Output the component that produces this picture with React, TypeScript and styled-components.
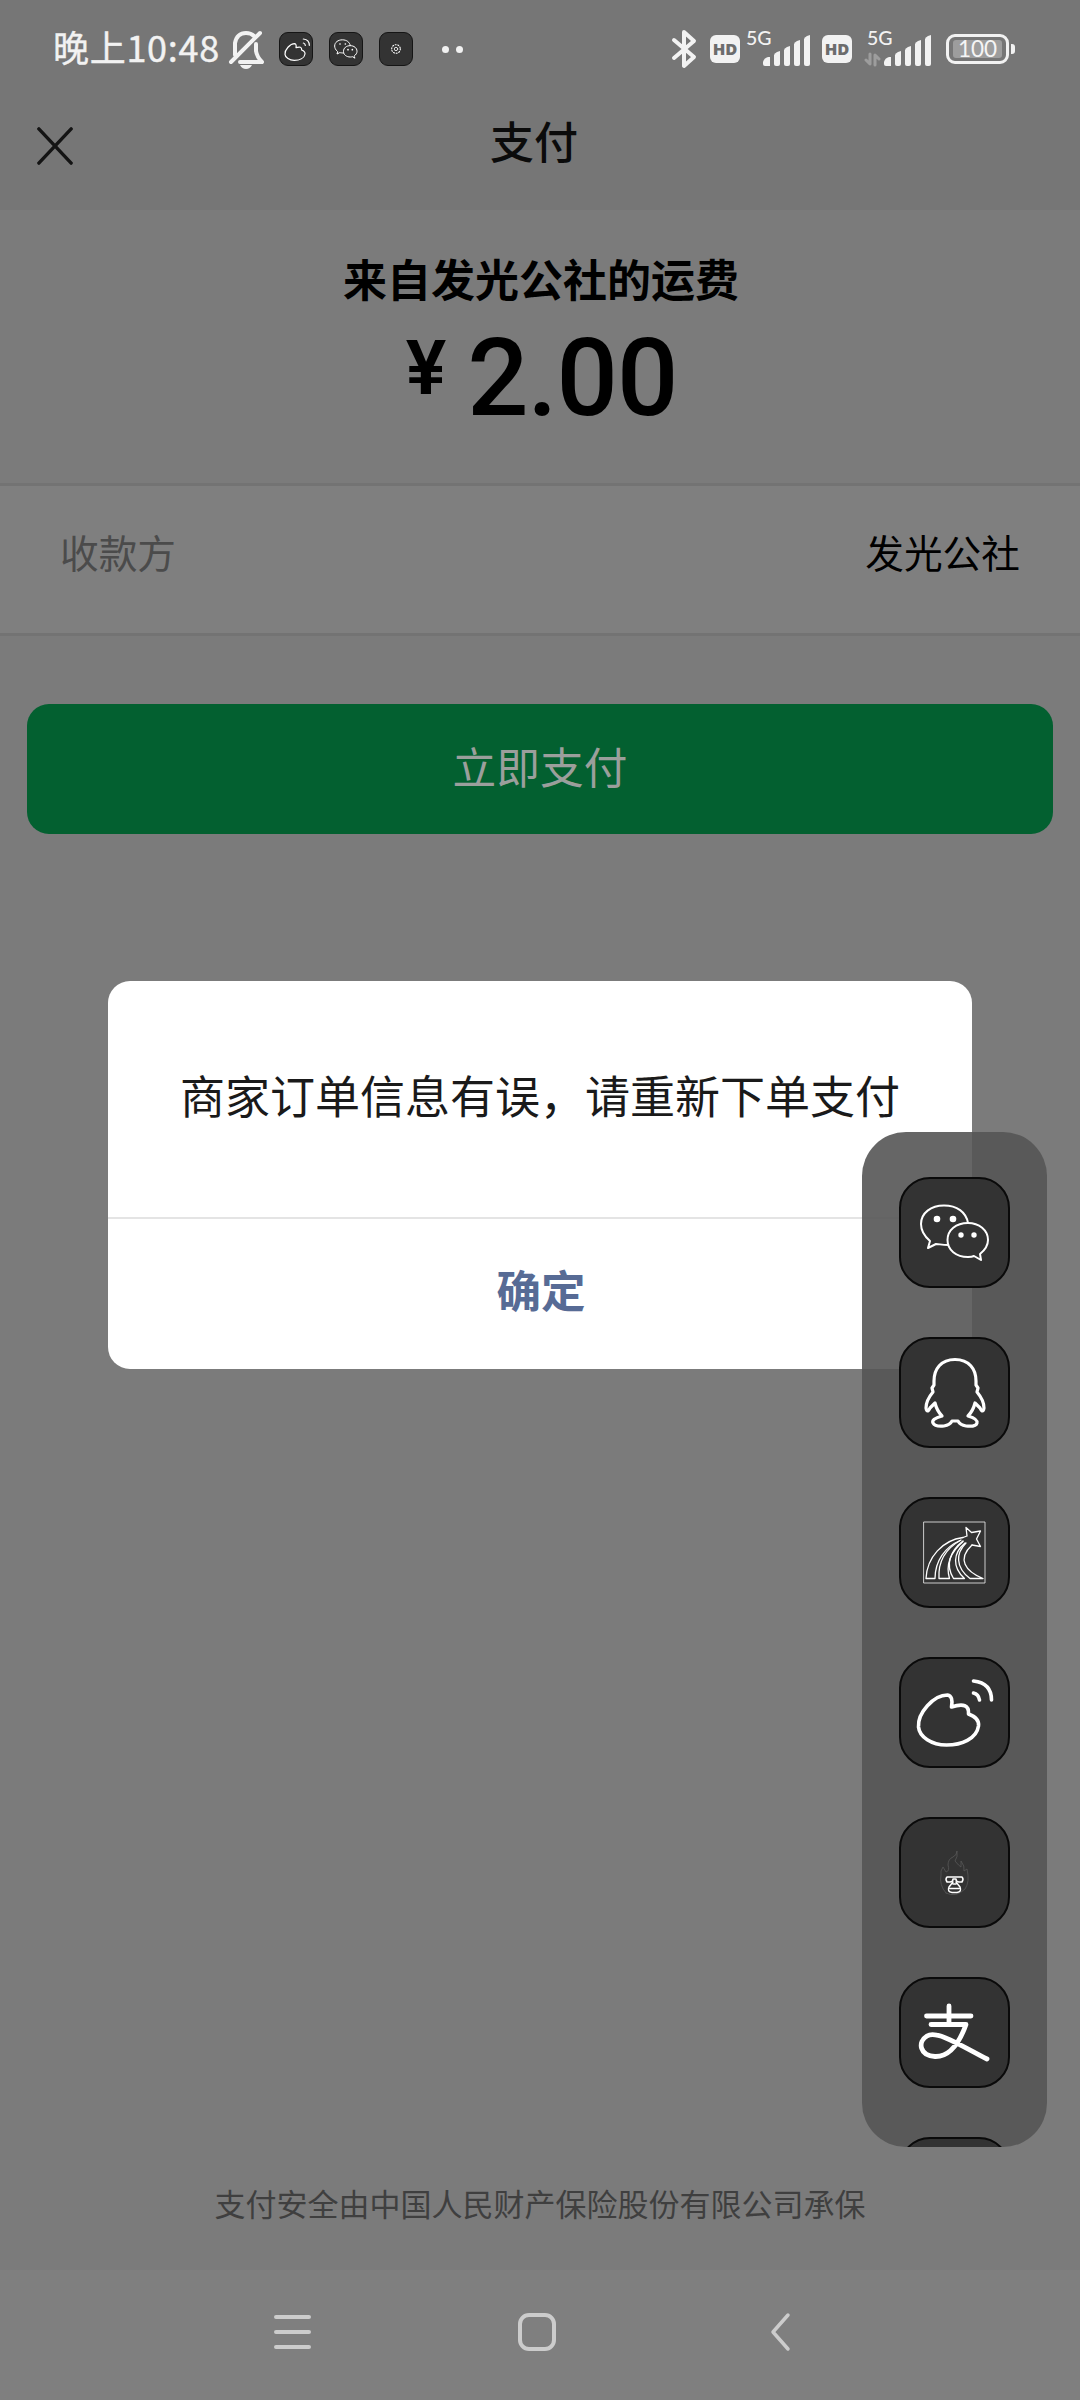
import React from "react";
import styled, { createGlobalStyle } from "styled-components";

const cjk = `"Noto Sans CJK SC", sans-serif`;

const GlobalStyle = createGlobalStyle`
  * { box-sizing: border-box; }
  body { margin: 0; font-family: ${cjk}; background: #7b7b7b; }
`;

const Screen = styled.div`
  position: relative;
  width: 1080px;
  height: 2400px;
  overflow: hidden;
  display: flex;
  flex-direction: column;
  background: #7b7b7b;
`;

const Top = styled.header`
  height: 210px;
  flex: none;
  background: #767676;
`;

const StatusBar = styled.div`
  height: 98px;
  display: flex;
  justify-content: space-between;
  align-items: center;
  padding: 0 65px 0 53px;
`;

const StatusGroup = styled.div`
  display: flex;
  align-items: center;
`;

const Clock = styled.span`
  width: 175px;
  font-size: 36px;
  line-height: 40px;
  letter-spacing: 0.7px;
  color: #f2f2f2;
  white-space: nowrap;
  margin-top: -6px;
  -webkit-text-stroke: 0.4px #f2f2f2;
`;

const MiniTile = styled.span`
  width: 34px;
  height: 34px;
  margin-right: 16px;
  border-radius: 9px;
  background: #333;
  border: 1px solid #151515;
  display: flex;
  align-items: center;
  justify-content: center;
`;

const Dots = styled.span`
  display: flex;
  gap: 7px;
  margin-left: 13px;
`;

const Dot = styled.span`
  width: 7px;
  height: 7px;
  border-radius: 50%;
  background: #f2f2f2;
`;

const Hd = styled.span<{ $left: number }>`
  margin-left: ${(p) => p.$left}px;
  width: 30px;
  height: 28px;
  border-radius: 6px;
  background: #f2f2f2;
  color: #6c6c6c;
  font: 800 16.5px/28px "Open Sans", sans-serif;
  text-align: center;
`;

const Network = styled.span<{ $left: number; $width: number }>`
  margin-left: ${(p) => p.$left}px;
  width: ${(p) => p.$width}px;
  height: 36px;
  display: grid;
  grid-template: 36px / 1fr;
  > * { grid-area: 1 / 1; }
`;

const NetLabel = styled.span<{ $left: number }>`
  margin-left: ${(p) => p.$left}px;
  margin-top: -2px;
  font: 500 19.5px/18px Lato, sans-serif;
  color: #f2f2f2;
`;

const Battery = styled.span`
  margin-left: 14px;
  width: 63px;
  height: 30px;
  border: 3px solid #f2f2f2;
  border-radius: 9px;
  padding: 3px 4px;
`;

const Charge = styled.span`
  display: flex;
  justify-content: center;
  height: 18px;
  border-radius: 3px;
  background: #9d9d9d;
  color: #f5f5f5;
  font: 400 22.5px/17px Lato, sans-serif;
`;

const BatteryTip = styled.span`
  margin-left: 2px;
  width: 4px;
  height: 10px;
  border-radius: 0 3px 3px 0;
  background: #f2f2f2;
`;

const TitleBar = styled.div`
  height: 96px;
  display: grid;
  grid-template-columns: 120px 1fr 132px;
  align-items: center;
`;

const CloseButton = styled.button`
  border: 0;
  background: none;
  padding: 0 0 0 35px;
  height: 40px;
  text-align: left;
`;

const Title = styled.h1`
  margin: -12px 0 0;
  text-align: center;
  font-size: 44px;
  line-height: 60px;
  font-weight: 500;
  color: #0b0b0b;
`;

const Summary = styled.section`
  height: 273px;
  flex: none;
  padding-top: 38px;
  text-align: center;
  color: #000;
`;

const Subject = styled.h2`
  margin: 0;
  padding-left: 2px;
  font-size: 44px;
  line-height: 60px;
  font-weight: 700;
`;

const Amount = styled.div`
  height: 110px;
  padding-left: 3px;
  display: flex;
  justify-content: center;
  align-items: flex-start;
  font-family: Roboto, sans-serif;
  font-weight: 500;
`;

const Currency = styled.span`
  font-size: 76px;
  line-height: 76px;
  font-weight: 600;
  margin: 22px 21px 0 0;
`;

const Figure = styled.span`
  font-size: 108px;
  line-height: 108px;
  letter-spacing: -1px;
  margin-top: 16px;
`;

const PayeeRow = styled.section`
  height: 153px;
  flex: none;
  display: flex;
  justify-content: space-between;
  align-items: center;
  padding: 0 60px 18px;
  background: #7f7f7f;
  border-top: 3px solid #737373;
  border-bottom: 3px solid #737373;
  font-size: 38.7px;
  line-height: 54px;
`;

const PayeeLabel = styled.span`
  color: #4b4b4b;
`;

const PayeeName = styled.span`
  color: #000;
`;

const PayButton = styled.button`
  flex: none;
  margin: 68px 27px 0;
  height: 130px;
  border: 0;
  border-radius: 22px;
  background: #036030;
  color: #9b9f9c;
  font: 400 43.7px/60px ${cjk};
  padding: 0 0 8px;
`;

const Insurance = styled.p`
  margin: auto 0 45px;
  text-align: center;
  font-size: 31px;
  line-height: 44px;
  color: #3f3f3f;
`;

const NavBar = styled.nav`
  flex: none;
  height: 130px;
  background: #7f7f7f;
  display: grid;
  grid-template-columns: 245px 253px auto;
  align-items: center;
  padding: 0 0 6px 270px;
`;

const Dialog = styled.div`
  position: absolute;
  left: 108px;
  top: 981px;
  width: 864px;
  height: 388px;
  border-radius: 22px;
  background: #fff;
  display: flex;
  flex-direction: column;
`;

const Message = styled.p`
  margin: 0;
  height: 238px;
  padding-top: 82px;
  text-align: center;
  white-space: nowrap;
  font-size: 45px;
  line-height: 64px;
  color: #1a1a1a;
  border-bottom: 2px solid #e4e4e4;
`;

const Confirm = styled.button`
  flex: 1;
  border: 0;
  background: none;
  padding: 0 0 10px 2px;
  color: #576b95;
  font: 700 44.5px/60px ${cjk};
`;

const Dock = styled.aside`
  position: absolute;
  left: 862px;
  top: 1132px;
  width: 185px;
  height: 1015px;
  padding: 45px 1px 0 0;
  border-radius: 44px;
  overflow: hidden;
  background: rgba(85, 85, 85, 0.9);
  display: flex;
  flex-direction: column;
  align-items: center;
  gap: 49px;
`;

const Tile = styled.div`
  flex: none;
  width: 111px;
  height: 111px;
  border-radius: 31px;
  border: 2px solid #0a0a0a;
  background: #333;
  display: flex;
  align-items: center;
  justify-content: center;
`;

const Glyph = styled.svg`
  display: block;
  flex: none;
  fill: none;
  stroke-linecap: round;
  stroke-linejoin: round;
`;

const BellGlyph = styled(Glyph)`
  margin-right: 15px;
`;

const BarsGlyph = styled(Glyph)`
  justify-self: end;
`;

const Bars = () => (
  <BarsGlyph width="49" height="36" viewBox="0 0 49 36">
    <g fill="#f2f2f2">
      <path d="M1 33v-2q1-4 5-5h2v9H3q-2 0-2-2Z" />
      <path d="M12 24q1-2 3-3l3-1v13q0 2-2 2h-2q-2 0-2-2Z" />
      <path d="M22 19q1-2 3-3l3-1v18q0 2-2 2h-2q-2 0-2-2Z" />
      <path d="M32 13q1-2 3-3l3-1v24q0 2-2 2h-2q-2 0-2-2Z" />
      <path d="M42 8q1-2 3-3l3-1v29q0 2-2 2h-2q-2 0-2-2Z" />
    </g>
  </BarsGlyph>
);

const WeiboShape = () => (
  <>
    <path d="M18 51C17 37 33 19 47 19Q53 20 51 31Q69 25 68 38Q79 42 78 50C76 63 61 69 46 69C31 69 19 61 18 51Z" />
    <path d="M73 5Q91 7 91 24M73 17Q78 18 79 24" />
  </>
);

const WechatShape = () => (
  <>
    <path d="M49 68C43 68 40 67 37 67L29 71L31 64C24 58 22 52 22 47C22 36 32 28.500 45 28.500C58 28.500 67 35 69 46" />
    <path d="M81 77C86 73 89 68 89 63C89 53 80 46 69 46C57 46 48.500 53 48.500 63C48.500 73 57 80 69 80Q73 80 75 79L82 83Z" />
  </>
);

const App = () => (
  <Screen>
    <GlobalStyle />
    <Top>
      <StatusBar>
        <StatusGroup>
          <Clock>晚上10:48</Clock>
          <BellGlyph width="36" height="40" viewBox="0 0 36 40">
            <path d="M3 33L32 4M7 26V14Q9 4 18 4Q23 4 26 7M28 15V22Q29 28 34 33H12" stroke="#f2f2f2" strokeWidth="4" />
            <path d="M12 36h12q-2 4-6 4t-6-4Z" fill="#f2f2f2" />
          </BellGlyph>
          <MiniTile>
            <Glyph width="32" height="32" viewBox="0 0 96 96" stroke="#fff" strokeWidth="3.6">
              <g transform="translate(-3 13)"><WeiboShape /></g>
            </Glyph>
          </MiniTile>
          <MiniTile>
            <Glyph width="32" height="32" viewBox="8 8 96 96" stroke="#fff" strokeWidth="3">
              <WechatShape />
              <path d="M38 41h.1M54 41h.1M62 58h.1M75 58h.1" strokeWidth="5" />
            </Glyph>
          </MiniTile>
          <MiniTile>
            <Glyph width="32" height="32" viewBox="0 0 32 32">
              <circle cx="16" cy="16" r="4.3" stroke="#fff" strokeWidth="1.1" strokeDasharray="1 1.7" />
              <circle cx="16" cy="16" r="1.7" stroke="#eee" strokeWidth="0.9" />
            </Glyph>
          </MiniTile>
          <Dots>
            <Dot />
            <Dot />
          </Dots>
        </StatusGroup>
        <StatusGroup>
          <Glyph width="26" height="40" viewBox="0 0 26 40" stroke="#f2f2f2" strokeWidth="4">
            <path d="M3 11L23 28L13 37V3L23 12L3 29" />
          </Glyph>
          <Hd $left={13}>HD</Hd>
          <Network $left={6} $width={65}>
            <NetLabel $left={0}>5G</NetLabel>
            <Bars />
          </Network>
          <Hd $left={11}>HD</Hd>
          <Network $left={12} $width={68}>
            <NetLabel $left={3}>5G</NetLabel>
            <Glyph width="17" height="36" viewBox="0 0 17 36" stroke="#9d9d9d" strokeWidth="3">
              <path d="M6 23V33L2 29M11 34V24L15 28" />
            </Glyph>
            <Bars />
          </Network>
          <Battery><Charge>100</Charge></Battery>
          <BatteryTip />
        </StatusGroup>
      </StatusBar>
      <TitleBar>
        <CloseButton aria-label="关闭">
          <Glyph width="40" height="38" viewBox="0 0 40 40" stroke="#141414" strokeWidth="3.6">
            <path d="M3 2L37 38M37 2L3 38" />
          </Glyph>
        </CloseButton>
        <Title>支付</Title>
      </TitleBar>
    </Top>
    <Summary>
      <Subject>来自发光公社的运费</Subject>
      <Amount>
        <Currency>¥</Currency>
        <Figure>2.00</Figure>
      </Amount>
    </Summary>
    <PayeeRow>
      <PayeeLabel>收款方</PayeeLabel>
      <PayeeName>发光公社</PayeeName>
    </PayeeRow>
    <PayButton>立即支付</PayButton>
    <Insurance>支付安全由中国人民财产保险股份有限公司承保</Insurance>
    <NavBar>
      <Glyph width="44" height="44" viewBox="0 0 44 44" stroke="#ccc" strokeWidth="4">
        <path d="M6 7H39M6 22H39M6 37H39" />
      </Glyph>
      <Glyph width="44" height="44" viewBox="0 0 44 44" stroke="#ccc" strokeWidth="4">
        <rect x="5" y="5" width="34" height="34" rx="9" />
      </Glyph>
      <Glyph width="26" height="44" viewBox="0 0 26 44" stroke="#ccc" strokeWidth="3.5">
        <path d="M20 5L5 22L20 39" />
      </Glyph>
    </NavBar>
    <Dialog>
      <Message>商家订单信息有误，请重新下单支付</Message>
      <Confirm>确定</Confirm>
    </Dialog>
    <Dock>
      <Tile>
        <Glyph width="111" height="111" viewBox="0 0 111 111" stroke="#fff" strokeWidth="2">
          <WechatShape />
          <g fill="#fff" stroke="none">
            <circle cx="38" cy="42" r="3.3" /><circle cx="54" cy="42" r="3.3" />
            <circle cx="62" cy="58" r="2.7" /><circle cx="75" cy="58" r="2.7" />
          </g>
        </Glyph>
      </Tile>
      <Tile>
        <Glyph width="111" height="111" viewBox="0 0 111 111" stroke="#fff" strokeWidth="3.2">
          <path d="M56 22.500C42 22.500 35 32 35 44V48L33 51L34 55C29 61 27 66 27 71Q28 77 31 71L36 66Q38 74 43 79Q32 82 34 86Q36 90 45 89Q51 88 53 84H59Q61 88 67 89Q77 90 78 86Q79 82 69 79Q74 74 76 66L81 71Q84 77 85 71C85 66 83 61 78 55L79 51L77 48V44C77 32 70 22.500 56 22.500Z" />
        </Glyph>
      </Tile>
      <Tile>
        <Glyph width="111" height="111" viewBox="0 0 111 111" stroke="#fff" strokeWidth="1.3">
          <rect x="25" y="25" width="61" height="61" stroke="#ddd" strokeWidth="0.9" />
          <path d="M64 40.500L68 39L67 30.500L72.500 35.500L81.500 34L77.500 42L81.500 49.500L73 48" />
          <path d="M64 40.500C44 43 28 60 27 81.500H36C36 64 46 50 61 43.500" />
          <path d="M62 43C46 52 39 66 40 81.500H50.500C46 66 53 54 64 44.500" />
          <path d="M64 44C51 54 46 68 54.500 81.500H65.500C53 70 54 56 66 46" />
          <path d="M67 46C57 56 56 70 71 81.500H84C66 74 58 62 73 48" />
        </Glyph>
      </Tile>
      <Tile>
        <Glyph width="111" height="111" viewBox="0 0 111 111" stroke="#fff" strokeWidth="3.6">
          <g transform="translate(1.500 19)"><WeiboShape /></g>
        </Glyph>
      </Tile>
      <Tile>
        <Glyph width="111" height="111" viewBox="0 0 111 111">
          <path d="M47 76Q40 68 42 58Q41 54 44 50L47 55Q51 54 49 48Q49 42 54 40Q58 38 58 34Q59 40 56 44Q60 49 62 50L62 44Q66 49 65 54L68 52Q71 65 66 72Q57 81 47 76Z" stroke="#585858" strokeWidth="0.8" />
          <g stroke="#fff" strokeWidth="1.5">
            <path d="M48 60H63Q65 62 63 65H60Q57 65 57 62H54Q54 65 51 65H48Q46 62 48 60Z" />
            <path d="M54 65L50 70Q48 75 53 75.500H58Q63 75 61 70L57 65M54 67H57M51 71.500H60" />
          </g>
        </Glyph>
      </Tile>
      <Tile>
        <Glyph width="111" height="111" viewBox="0 0 111 111" stroke="#fff" strokeWidth="4.8">
          <path d="M27.500 39H72M50 29V47M32 47.500H67C60 67 50 80 36 79.500C21 79 18 65 28 59C38 53 61 68 88 82" />
        </Glyph>
      </Tile>
      <Tile />
    </Dock>
  </Screen>
);

export default App;
